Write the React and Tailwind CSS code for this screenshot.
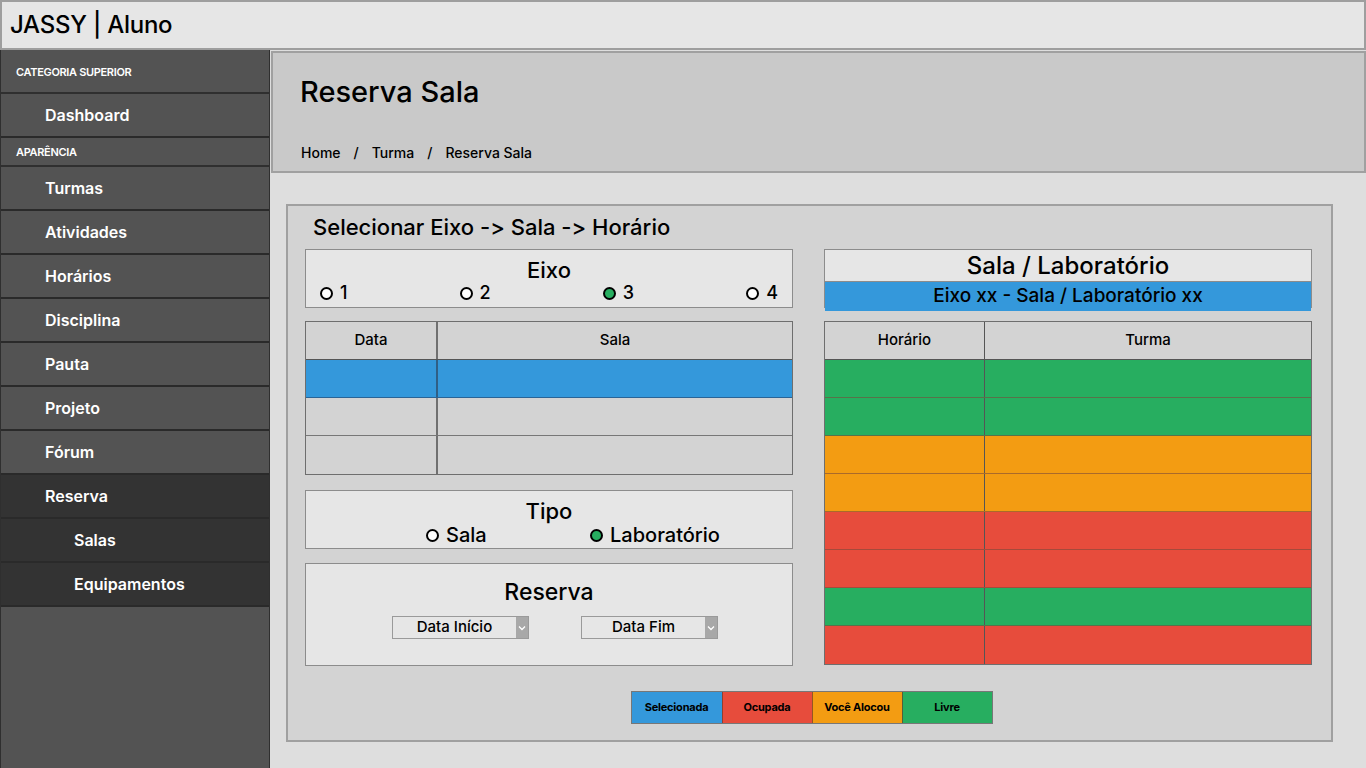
import React from 'react';

const font = { fontFamily: 'Inter, "Noto Sans", sans-serif' };

const menu = [
  { label: 'CATEGORIA SUPERIOR', kind: 'cat', h: 'h-[44px]' },
  { label: 'Dashboard', kind: 'item' },
  { label: 'APARÊNCIA', kind: 'cat', h: 'h-[29px]' },
  { label: 'Turmas', kind: 'item' },
  { label: 'Atividades', kind: 'item' },
  { label: 'Horários', kind: 'item' },
  { label: 'Disciplina', kind: 'item' },
  { label: 'Pauta', kind: 'item' },
  { label: 'Projeto', kind: 'item' },
  { label: 'Fórum', kind: 'item' },
  { label: 'Reserva', kind: 'active' },
  { label: 'Salas', kind: 'sub' },
  { label: 'Equipamentos', kind: 'sub' },
];

const SideItem = ({ label, kind, h }) => {
  if (kind === 'cat') {
    return (
      <div className={`${h} flex items-center pl-[15px] border-b-2 border-[#2f2f2f] bg-[#535353] text-[11px] font-semibold text-white tracking-[-0.03em] pt-[2px]`}>
        {label}
      </div>
    );
  }
  const dark = kind === 'active' || kind === 'sub';
  return (
    <div
      className={`h-[44px] flex items-center border-b-2 border-[#2a2a2a] text-[16px] font-semibold text-white
        ${dark ? 'bg-[#333333]' : 'bg-[#535353]'} ${kind === 'sub' ? 'pl-[73px]' : 'pl-[44px]'}`}
    >
      {label}
    </div>
  );
};

const Radio = ({ checked, label, className = '' }) => (
  <span className={`flex items-center gap-[7px] ${className}`}>
    <span
      className={`inline-block w-[13px] h-[13px] rounded-full border-2 border-black
        ${checked ? 'bg-[#27ae60]' : 'bg-white'}`}
    />
    {label}
  </span>
);

const Select = ({ label }) => (
  <div className="flex w-[137px] h-[23px] border border-[#9a9a9a] bg-[#e6e6e6]">
    <div className="flex-1 flex items-center justify-center text-[15px] font-medium text-black">
      {label}
    </div>
    <div className="w-[12px] bg-[#a8a8a8] flex items-center justify-center">
      <svg width="8" height="6" viewBox="0 0 8 6">
        <path d="M1 1.5 L4 4.5 L7 1.5" stroke="#fff" strokeWidth="1.3" fill="none" />
      </svg>
    </div>
  </div>
);

const slots = ['green', 'green', 'orange', 'orange', 'red', 'red', 'green', 'red'];
const slotBg = {
  green: 'bg-[#27ae60]',
  orange: 'bg-[#f39c12]',
  red: 'bg-[#e74c3c]',
};

const legend = [
  { label: 'Selecionada', bg: 'bg-[#3498db]' },
  { label: 'Ocupada', bg: 'bg-[#e74c3c]' },
  { label: 'Você Alocou', bg: 'bg-[#f39c12]' },
  { label: 'Livre', bg: 'bg-[#27ae60]' },
];

export default function App() {
  return (
    <div style={font} className="w-[1366px] h-[768px] flex flex-col bg-[#dedede] overflow-hidden">
      {/* top bar */}
      <header className="h-[50px] shrink-0 flex items-center pl-[8px] bg-[#e6e6e6] border-2 border-[#9e9e9e]">
        <span className="text-[24px] font-medium text-black tracking-[-0.01em]">JASSY | Aluno</span>
      </header>

      <div className="flex flex-1 min-h-0">
        {/* sidebar */}
        <aside className="w-[270px] shrink-0 bg-[#535353] border-r border-[#2f2f2f] border-l border-l-[#2f2f2f] flex flex-col">
          {menu.map((m) => (
            <SideItem key={m.label} {...m} />
          ))}
        </aside>

        {/* main */}
        <main className="flex-1 flex flex-col">
          <div className="h-[122px] mt-[1px] ml-[1px] bg-[#c9c9c9] border-2 border-[#a0a0a0] pl-[27px] flex flex-col">
            <h1 className="mt-[21px] text-[29px] font-medium text-black leading-[36px]">Reserva Sala</h1>
            <div className="mt-[34px] text-[14px] font-medium text-black flex gap-[13px] pl-[1px] leading-[18px]">
              <span>Home</span>
              <span>/</span>
              <span>Turma</span>
              <span>/</span>
              <span>Reserva Sala</span>
            </div>
          </div>

          <div className="mt-[31px] ml-[16px] w-[1047px] h-[538px] bg-[#d3d3d3] border-2 border-[#a0a0a0] px-[17px]">
            <h2 className="mt-[6px] ml-[8px] text-[22px] font-medium text-black leading-[30px] [font-feature-settings:'calt'_0]">
              Selecionar Eixo -&gt; Sala -&gt; Horário
            </h2>

            <div className="mt-[7px] flex gap-[31px]">
              {/* left column */}
              <div className="w-[488px] flex flex-col">
                <div className="h-[59px] bg-[#e6e6e6] border border-[#8c8c8c] flex flex-col items-center">
                  <div className="text-[22px] font-medium text-black leading-[26px] mt-[7px]">Eixo</div>
                  <div className="w-full flex justify-between px-[14px] text-[18px] font-medium text-black leading-[20px]">
                    <Radio label="1" />
                    <Radio label="2" />
                    <Radio label="3" checked />
                    <Radio label="4" />
                  </div>
                </div>

                <div className="mt-[13px] border border-[#6e6e6e] flex flex-col">
                  <div className="h-[38px] flex border-b border-[#555] text-[15px] font-medium text-black">
                    <div className="w-[132px] flex items-center justify-center border-r-2 border-[#707070]">Data</div>
                    <div className="flex-1 flex items-center justify-center">Sala</div>
                  </div>
                  <div className="h-[38px] flex bg-[#3498db] border-b border-[#2a6496]">
                    <div className="w-[132px] border-r-2 border-[#2f5f86]" />
                  </div>
                  <div className="h-[38px] flex border-b border-[#777]">
                    <div className="w-[132px] border-r-2 border-[#707070]" />
                  </div>
                  <div className="h-[38px] flex">
                    <div className="w-[132px] border-r-2 border-[#707070]" />
                  </div>
                </div>

                <div className="mt-[15px] h-[59px] bg-[#e6e6e6] border border-[#8c8c8c] flex flex-col items-center">
                  <div className="text-[22px] font-medium text-black leading-[26px] mt-[7px]">Tipo</div>
                  <div className="flex text-[20px] font-medium text-black leading-[22px] ml-[48px]">
                    <Radio label="Sala" className="w-[164px]" />
                    <Radio label="Laboratório" checked />
                  </div>
                </div>

                <div className="mt-[14px] h-[103px] bg-[#e6e6e6] border border-[#8c8c8c] flex flex-col items-center">
                  <div className="text-[23px] font-medium text-black leading-[26px] mt-[15px]">Reserva</div>
                  <div className="mt-[11px] flex gap-[52px] ml-[12px]">
                    <Select label="Data Início" />
                    <Select label="Data Fim" />
                  </div>
                </div>
              </div>

              {/* right column */}
              <div className="w-[488px] flex flex-col">
                <div className="h-[59px] border border-[#8c8c8c] flex flex-col">
                  <div className="h-[32px] bg-[#e6e6e6] flex items-center justify-center text-[24px] font-medium text-black border-b border-[#8c8c8c]">
                    Sala / Laboratório
                  </div>
                  <div className="flex-1 bg-[#3498db] flex items-center justify-center text-[19px] font-medium text-black">
                    Eixo xx - Sala / Laboratório xx
                  </div>
                </div>

                <div className="mt-[13px] border border-[#6e6e6e] flex flex-col">
                  <div className="h-[38px] flex border-b border-[#555] text-[15px] font-medium text-black">
                    <div className="w-[160px] flex items-center justify-center border-r border-[#555]">Horário</div>
                    <div className="flex-1 flex items-center justify-center">Turma</div>
                  </div>
                  {slots.map((s, i) => (
                    <div
                      key={i}
                      className={`h-[38px] flex ${slotBg[s]} ${i < slots.length - 1 ? 'border-b border-[#7a4a3a]/60' : ''}`}
                    >
                      <div className="w-[160px] border-r border-[#555]" />
                    </div>
                  ))}
                </div>
              </div>
            </div>

            {/* legend */}
            <div className="mt-[25px] flex justify-center ml-[4px]">
              <div className="flex border border-[#3a3a3a]/60">
                {legend.map((l, i) => (
                  <div
                    key={l.label}
                    className={`w-[90px] h-[31px] flex items-center justify-center text-[11px] font-bold text-black tracking-[-0.02em] ${l.bg}
                      ${i > 0 ? 'border-l border-[#6b3a2a]/70' : ''}`}
                  >
                    {l.label}
                  </div>
                ))}
              </div>
            </div>
          </div>
        </main>
      </div>
    </div>
  );
}
